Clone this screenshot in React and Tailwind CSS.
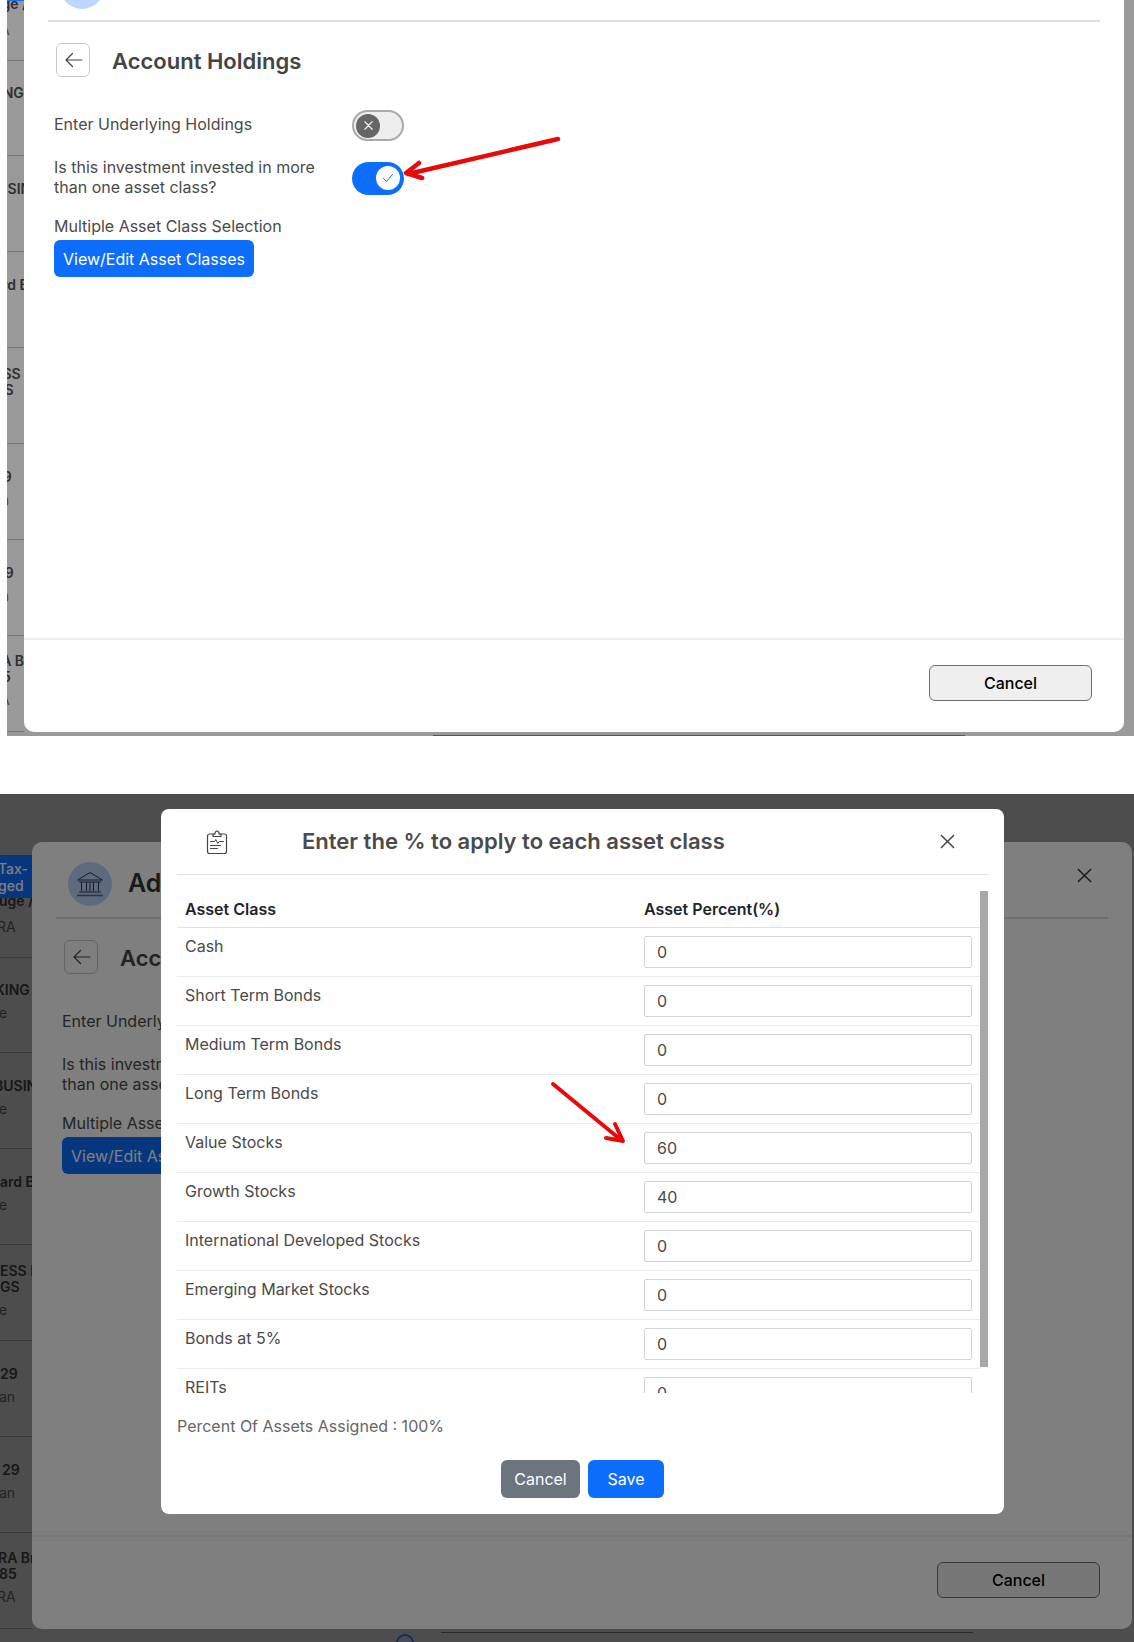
import React from "react";

const stripRows = [
  { h: "h-[60px]", pt: "pt-0", lines: [["uge /", "ml-[-1px] mt-[-5px]"]], sub: ["RA", "ml-[-3px]"], gap: "mt-[10px]" },
  { h: "h-[95px]", pt: "pt-[24px]", lines: [["KING", "ml-[-5px]"]], sub: ["e", "ml-[-1px]"], gap: "mt-[7px]" },
  { h: "h-[96px]", pt: "pt-[25px]", lines: [["BUSIN", "ml-[-6px]"]], sub: ["e", "ml-[-1px]"], gap: "mt-[7px]" },
  { h: "h-[96px]", pt: "pt-[25px]", lines: [["ard B", "ml-0"]], sub: ["e", "ml-[-1px]"], gap: "mt-[7px]" },
  { h: "h-[96px]", pt: "pt-[18px]", lines: [["ESS N", "ml-0"], ["GS", "ml-0"]], sub: ["e", "ml-[-1px]"], gap: "mt-[7px]" },
  { h: "h-[96px]", pt: "pt-[25px]", lines: [["29", "ml-0"]], sub: ["an", "ml-[-1px]"], gap: "mt-[7px]" },
  { h: "h-[96px]", pt: "pt-[25px]", lines: [["29", "ml-[2px]"]], sub: ["an", "ml-[-1px]"], gap: "mt-[7px]" },
  { h: "h-[96px]", pt: "pt-[17px]", lines: [["RA Br", "ml-[-2px]"], ["85", "ml-[-1px]"]], sub: ["RA", "ml-[-3px]"], gap: "mt-[7px]" },
];

function Strip({ top }) {
  return (
    <div className={top ? "w-[17px] shrink-0 overflow-hidden mt-[13px]" : "w-[32px] shrink-0 overflow-hidden mt-[13px]"}>
      <div className={top ? "ml-[-13px] w-[60px]" : "w-[60px]"}>
        <div className="relative z-10 h-[43px] w-[32px] bg-[#0d6efd] text-white text-[14px] leading-[17px] font-medium pt-[5px] whitespace-nowrap">
          <div className="ml-[-2px]">Tax-</div>
          <div className="ml-[-2px]">ged</div>
        </div>
        {stripRows.map((r, i) => (
          <div key={i} className={`${r.h} ${r.pt} flex flex-col border-b border-[#777] whitespace-nowrap text-[14px] leading-[16px]`}>
            {r.lines.map(([t, m], j) => (
              <div key={j} className={`${m} font-semibold text-[#2f2f2f]`}>{t}</div>
            ))}
            <div className={`${r.gap} ${r.sub[1]} text-[#444]`}>{r.sub[0]}</div>
          </div>
        ))}
      </div>
    </div>
  );
}

function CloseX({ className, color = "#333", width = "1.6" }) {
  return (
    <svg viewBox="0 0 16 16" className={className} fill="none" stroke={color} strokeWidth={width} strokeLinecap="round">
      <path d="M1.5 1.5 14.5 14.5M14.5 1.5 1.5 14.5" />
    </svg>
  );
}

function BankIcon() {
  return (
    <svg viewBox="0 0 28 26" className="w-[28px] h-[26px]" fill="none" stroke="#2c3a50" strokeWidth="1">
      <path d="M1.5 9 14 1.5 26.5 9Z" strokeLinejoin="round" />
      <path d="M5.5 11v9M10.5 11v9M14 11v9M17.5 11v9M22.5 11v9" />
      <path d="M3 11h22M3 21h22" />
      <path d="M1 24.5h26" strokeWidth="1.6" stroke="#5a6a82" />
    </svg>
  );
}

function ToggleOff() {
  return (
    <div className="w-[52px] h-[31px] rounded-full bg-[#eeeeee] border-2 border-[#aaaaaa] flex items-center pl-[2px]">
      <div className="w-[24px] h-[24px] rounded-full bg-[#666666] flex items-center justify-center">
        <CloseX className="w-[9px] h-[9px]" color="#e8e8e8" width="2.4" />
      </div>
    </div>
  );
}

function ToggleOn() {
  return (
    <div className="w-[52px] h-[33px] rounded-full bg-[#0d6efd] flex items-center justify-end pr-[4px]">
      <div className="w-[24px] h-[24px] rounded-full bg-white flex items-center justify-center">
        <svg viewBox="0 0 12 12" className="w-[12px] h-[12px]" fill="none" stroke="#0d6efd" strokeWidth="1" strokeLinecap="round" strokeLinejoin="round">
          <path d="M1.5 6.5 4.5 9.5 10.5 2.5" />
        </svg>
      </div>
    </div>
  );
}

function Holdings({ top }) {
  return (
    <div className={top ? "isolate flex h-[791px] mt-[-55px] w-[1127px] bg-[#9a9a9a]" : "isolate flex h-[848px] pt-[48px] bg-[#9a9a9a]"}>
      <Strip top={top} />
      <div className="w-[1100px]">
        <div className="w-[1100px] h-[787px] bg-white rounded-[10px] flex flex-col">
          <div className="mx-[24px] h-[77px] border-b-2 border-[#dddddd] flex items-start pt-[20px] pl-[12px] shrink-0">
            <div className="w-[44px] h-[44px] rounded-full bg-[#bcd7fe] flex items-center justify-center shrink-0">
              <BankIcon />
            </div>
            <div className="ml-[16px] text-[25px] leading-[42px] font-semibold text-[#333]">Add Account</div>
            <CloseX className="ml-auto mr-[16px] mt-[6px] w-[15px] h-[15px]" />
          </div>
          <div className="flex-1 pl-[30px]">
            <div className="mt-[21px] pl-[2px] flex items-center h-[34px]">
              <div className="w-[34px] h-[34px] rounded-[6px] border border-[#c8c8c8] flex items-center justify-center pl-[2px]">
                <svg viewBox="0 0 20 20" className="w-[20px] h-[20px]" fill="none" stroke="#444" strokeWidth="1.2" strokeLinecap="round" strokeLinejoin="round">
                  <path d="M18 10H2M8.5 3.5 2 10l6.5 6.5" />
                </svg>
              </div>
              <div className="ml-[22px] mt-[2px] text-[22px] leading-[34px] font-semibold text-[#444]">Account Holdings</div>
            </div>
            <div className="mt-[33px] flex items-start h-[31px]">
              <div className="w-[298px] mt-[4px] text-[16px] leading-[20px] text-[#4a4a4a]">Enter Underlying Holdings</div>
              <ToggleOff />
            </div>
            <div className="mt-[16px] flex items-center h-[40px]">
              <div className="w-[298px] text-[16px] leading-[20px] text-[#4a4a4a]">Is this investment invested in more than one asset class?</div>
              <div className="mt-[2px]"><ToggleOn /></div>
            </div>
            <div className="mt-[19px] text-[16px] leading-[20px] text-[#4a4a4a]">Multiple Asset Class Selection</div>
            <div className="mt-[4px] w-[200px] h-[37px] rounded-[6px] bg-[#0d6efd] text-white text-[16px] flex items-center justify-center">View/Edit Asset Classes</div>
          </div>
          <div className="h-[94px] border-t-2 border-[#eeeeee] shrink-0 flex justify-end items-start pt-[25px] pr-[32px]">
            <div className="w-[163px] h-[36px] rounded-[6px] border border-[#6f6f6f] bg-[#efefef] text-black text-[16px] font-medium flex items-center justify-center">Cancel</div>
          </div>
        </div>
        <div className="flex items-start ml-[364px]">
          <div className="w-[18px] h-[18px] rounded-full border-2 border-[#1d5fc0] mt-[5px] shrink-0" />
          <div className="ml-[27px] mt-[3px] w-[532px] h-px bg-[#555]" />
        </div>
      </div>
    </div>
  );
}

const assets = [
  ["Cash", "0"],
  ["Short Term Bonds", "0"],
  ["Medium Term Bonds", "0"],
  ["Long Term Bonds", "0"],
  ["Value Stocks", "60"],
  ["Growth Stocks", "40"],
  ["International Developed Stocks", "0"],
  ["Emerging Market Stocks", "0"],
  ["Bonds at 5%", "0"],
  ["REITs", "0"],
];

function Dialog() {
  return (
    <div className="absolute left-[161px] top-[15px] w-[843px] h-[705px] bg-white rounded-[8px] px-[16px] flex flex-col">
      <div className="h-[66px] border-b border-[#dee2e6] flex items-center shrink-0">
        <svg viewBox="0 0 22 24" className="ml-[29px] w-[22px] h-[24px]" fill="none" stroke="#444" strokeWidth="1.2" strokeLinecap="round" strokeLinejoin="round">
          <path d="M7 4H3.5A2 2 0 0 0 1.5 6v15.5a2 2 0 0 0 2 2h15a2 2 0 0 0 2-2V6a2 2 0 0 0-2-2H15" />
          <path d="M7 6.5V4.2h1.8C9 2.5 9.8 1 11 1s2 1.5 2.2 3.2H15v2.3Z" />
          <path d="M4.5 11.5h4l1.3-2 2 4 1.4-2h4.3M4.5 15.5h10M4.5 18.5h7" strokeWidth="1" />
        </svg>
        <div className="ml-[74px] mb-[2px] text-[22px] leading-[30px] font-semibold text-[#4a4a4a]">Enter the % to apply to each asset class</div>
        <CloseX className="ml-auto mr-[33px] w-[15px] h-[15px]" color="#444" />
      </div>
      <div className="mt-[16px] h-[502px] overflow-hidden flex shrink-0">
        <div className="flex-1">
          <div className="h-[37px] border-b border-[#dee2e6] flex items-center text-[16px] font-semibold text-[#212529]">
            <div className="w-[467px] pl-[8px]">Asset Class</div>
            <div>Asset Percent(%)</div>
          </div>
          {assets.map(([name, value]) => (
            <div key={name} className="h-[49px] border-b border-[#e9ecef] flex items-start shrink-0">
              <div className="w-[467px] pl-[8px] pt-[8px] text-[16px] leading-[20px] text-[#4a4a4a]">{name}</div>
              <div className="mt-[8px] w-[328px] h-[32px] border border-[#ced4da] rounded-[2px] pl-[12px] flex items-center text-[16px] text-[#4a4a4a]">{value}</div>
            </div>
          ))}
        </div>
        <div className="w-[8px] h-[476px] bg-[#a8a8a8] shrink-0" />
      </div>
      <div className="mt-[23px] text-[16px] leading-[20px] text-[#666666]">Percent Of Assets Assigned : 100%</div>
      <div className="mt-[24px] flex justify-center gap-[8px]">
        <div className="w-[79px] h-[38px] rounded-[6px] bg-[#6c757d] text-white text-[16px] flex items-center justify-center">Cancel</div>
        <div className="w-[76px] h-[38px] rounded-[6px] bg-[#0d6efd] text-white text-[16px] flex items-center justify-center">Save</div>
      </div>
    </div>
  );
}

export default function App() {
  return (
    <div className="w-[1134px] h-[1642px] bg-white overflow-hidden font-['Inter',sans-serif]">
      <section className="relative h-[736px] ml-[7px] overflow-hidden bg-[#9a9a9a]">
        <Holdings top />
        <svg viewBox="0 0 200 60" className="absolute left-[393px] top-[130px] w-[200px] h-[60px]" fill="none" stroke="#e80a0a" strokeWidth="4.5" strokeLinecap="round" strokeLinejoin="round">
          <path d="M158 9 8 44M19 33 6 43l16 5" />
        </svg>
      </section>
      <section className="relative mt-[58px] h-[848px] overflow-hidden">
        <Holdings />
        <div className="absolute inset-0 bg-black/50" />
        <Dialog />
        <svg viewBox="0 0 90 70" className="absolute left-[545px] top-[284px] w-[90px] h-[70px]" fill="none" stroke="#e80a0a" strokeWidth="4" strokeLinecap="round" strokeLinejoin="round">
          <path d="M8 6 76 62M70 46 78 63 61 60" />
        </svg>
      </section>
    </div>
  );
}
